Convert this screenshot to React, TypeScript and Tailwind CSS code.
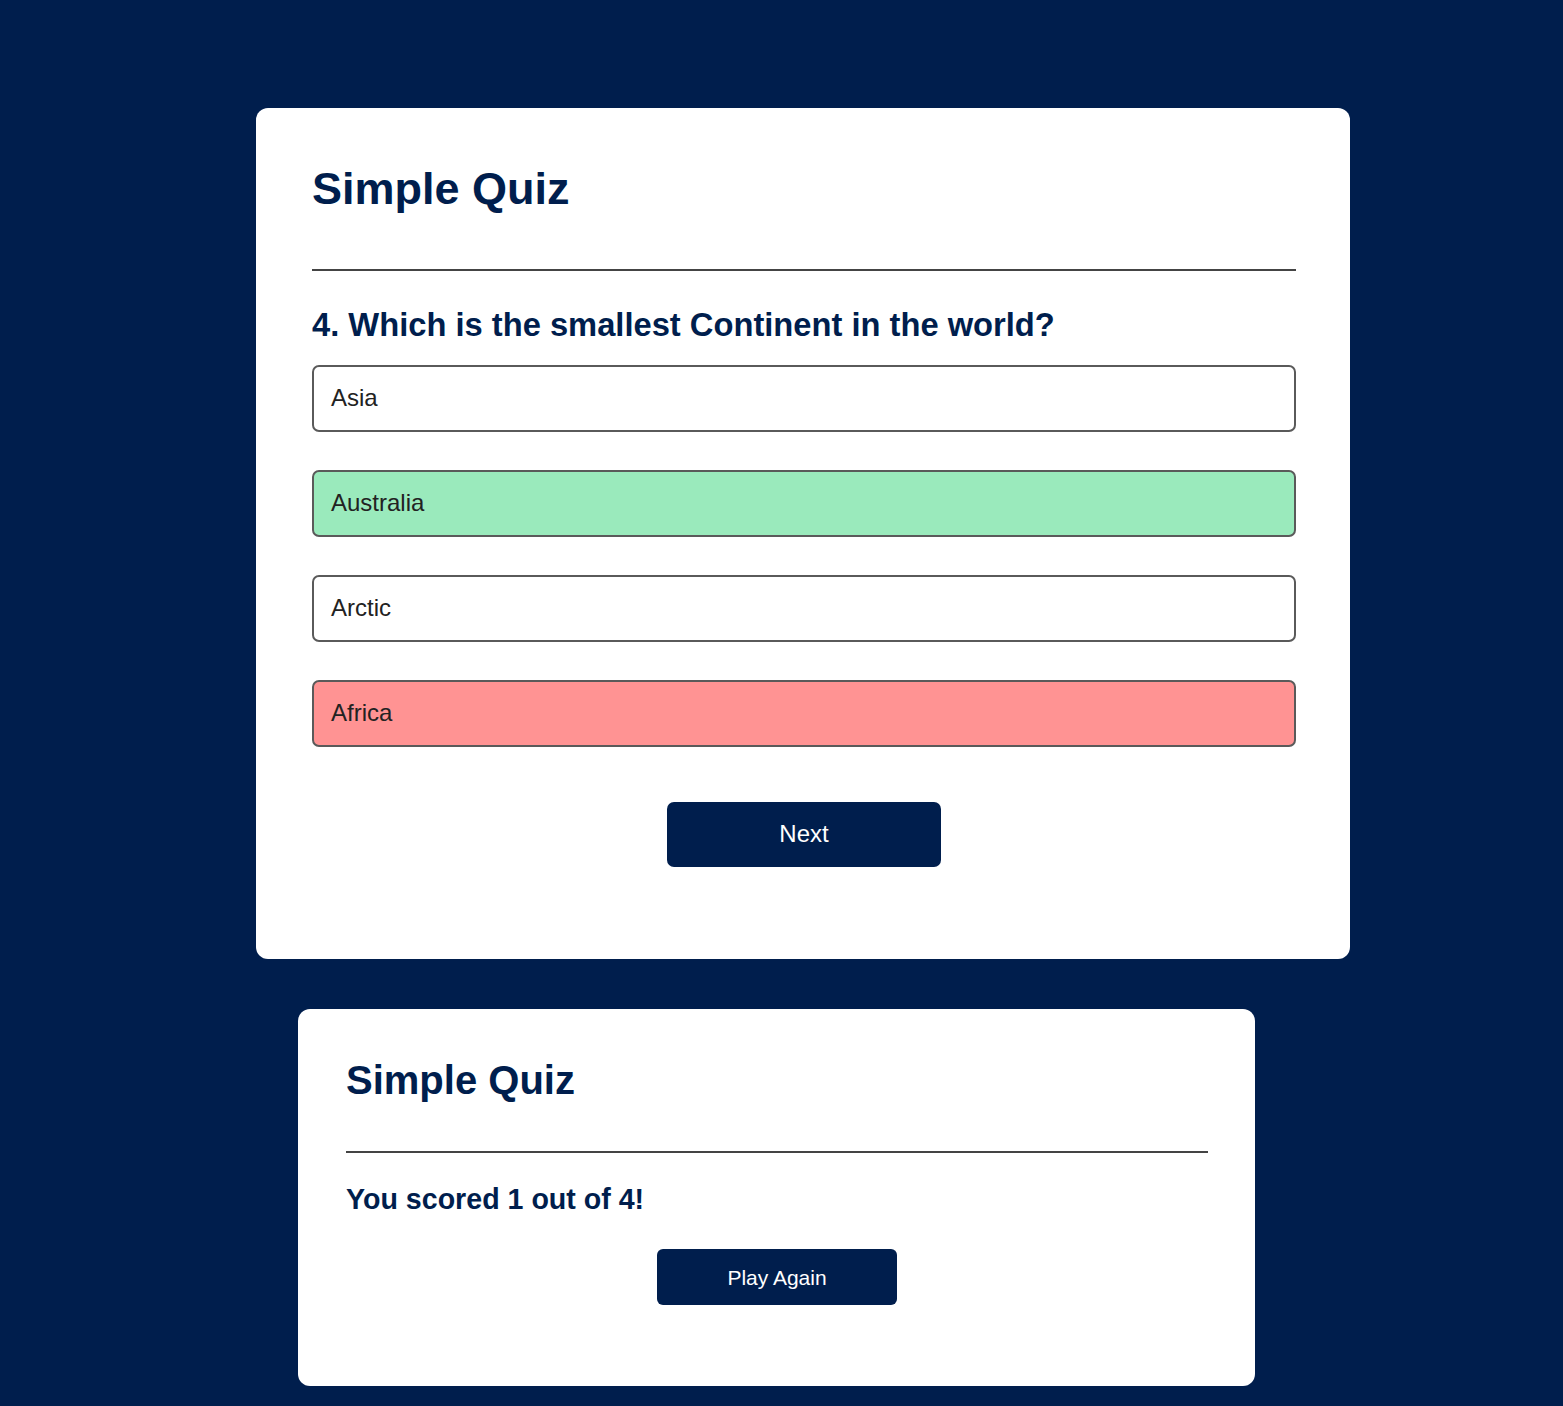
import React from "react";

type Answer = { text: string; state?: "correct" | "wrong" };

const answers: Answer[] = [
  { text: "Asia" },
  { text: "Australia", state: "correct" },
  { text: "Arctic" },
  { text: "Africa", state: "wrong" },
];

const AnswerButton = ({ text, state }: Answer) => {
  const bg =
    state === "correct" ? "bg-[#9aeabc]" : state === "wrong" ? "bg-[#ff9393]" : "bg-white";
  return (
    <button
      className={`${bg} w-full h-[67px] flex items-center px-[17px] border-2 border-[#5a5a5a] rounded-[7px] text-[24px] text-[#222] text-left`}
    >
      {text}
    </button>
  );
};

export default function App() {
  return (
    <div
      className="min-h-screen bg-[#001e4d] pt-[108px] pb-[20px] flex flex-col items-start"
      style={{ fontFamily: '"Liberation Sans", Arial, sans-serif' }}
    >
      <div className="ml-[256px] w-[1094px] bg-white rounded-[12px] pl-[56px] pr-[54px] pt-[58px] pb-[92px]">
        <h1 className="text-[45px] leading-none font-bold text-[#001e4d]">Simple Quiz</h1>
        <div className="mt-[58px] h-[2px] bg-[#444]" />
        <h2 className="mt-[38px] text-[32.7px] leading-none font-bold text-[#001e4d]">
          4. Which is the smallest Continent in the world?
        </h2>
        <div className="mt-[23px] flex flex-col gap-[38px]">
          {answers.map((a) => (
            <AnswerButton key={a.text} {...a} />
          ))}
        </div>
        <div className="mt-[55px] flex justify-center">
          <button className="w-[274px] h-[65px] bg-[#001e4d] text-white text-[24px] rounded-[7px]">
            Next
          </button>
        </div>
      </div>

      <div className="ml-[298px] mt-[50px] w-[957px] bg-white rounded-[12px] pl-[48px] pr-[47px] pt-[51px] pb-[81px]">
        <h1 className="text-[40px] leading-none font-bold text-[#001e4d]">Simple Quiz</h1>
        <div className="mt-[51px] h-[2px] bg-[#444]" />
        <h2 className="mt-[32px] text-[28.6px] leading-none font-bold text-[#001e4d]">
          You scored 1 out of 4!
        </h2>
        <div className="mt-[36px] flex justify-center">
          <button className="w-[240px] h-[56px] bg-[#001e4d] text-white text-[21px] rounded-[6px]">
            Play Again
          </button>
        </div>
      </div>
    </div>
  );
}
